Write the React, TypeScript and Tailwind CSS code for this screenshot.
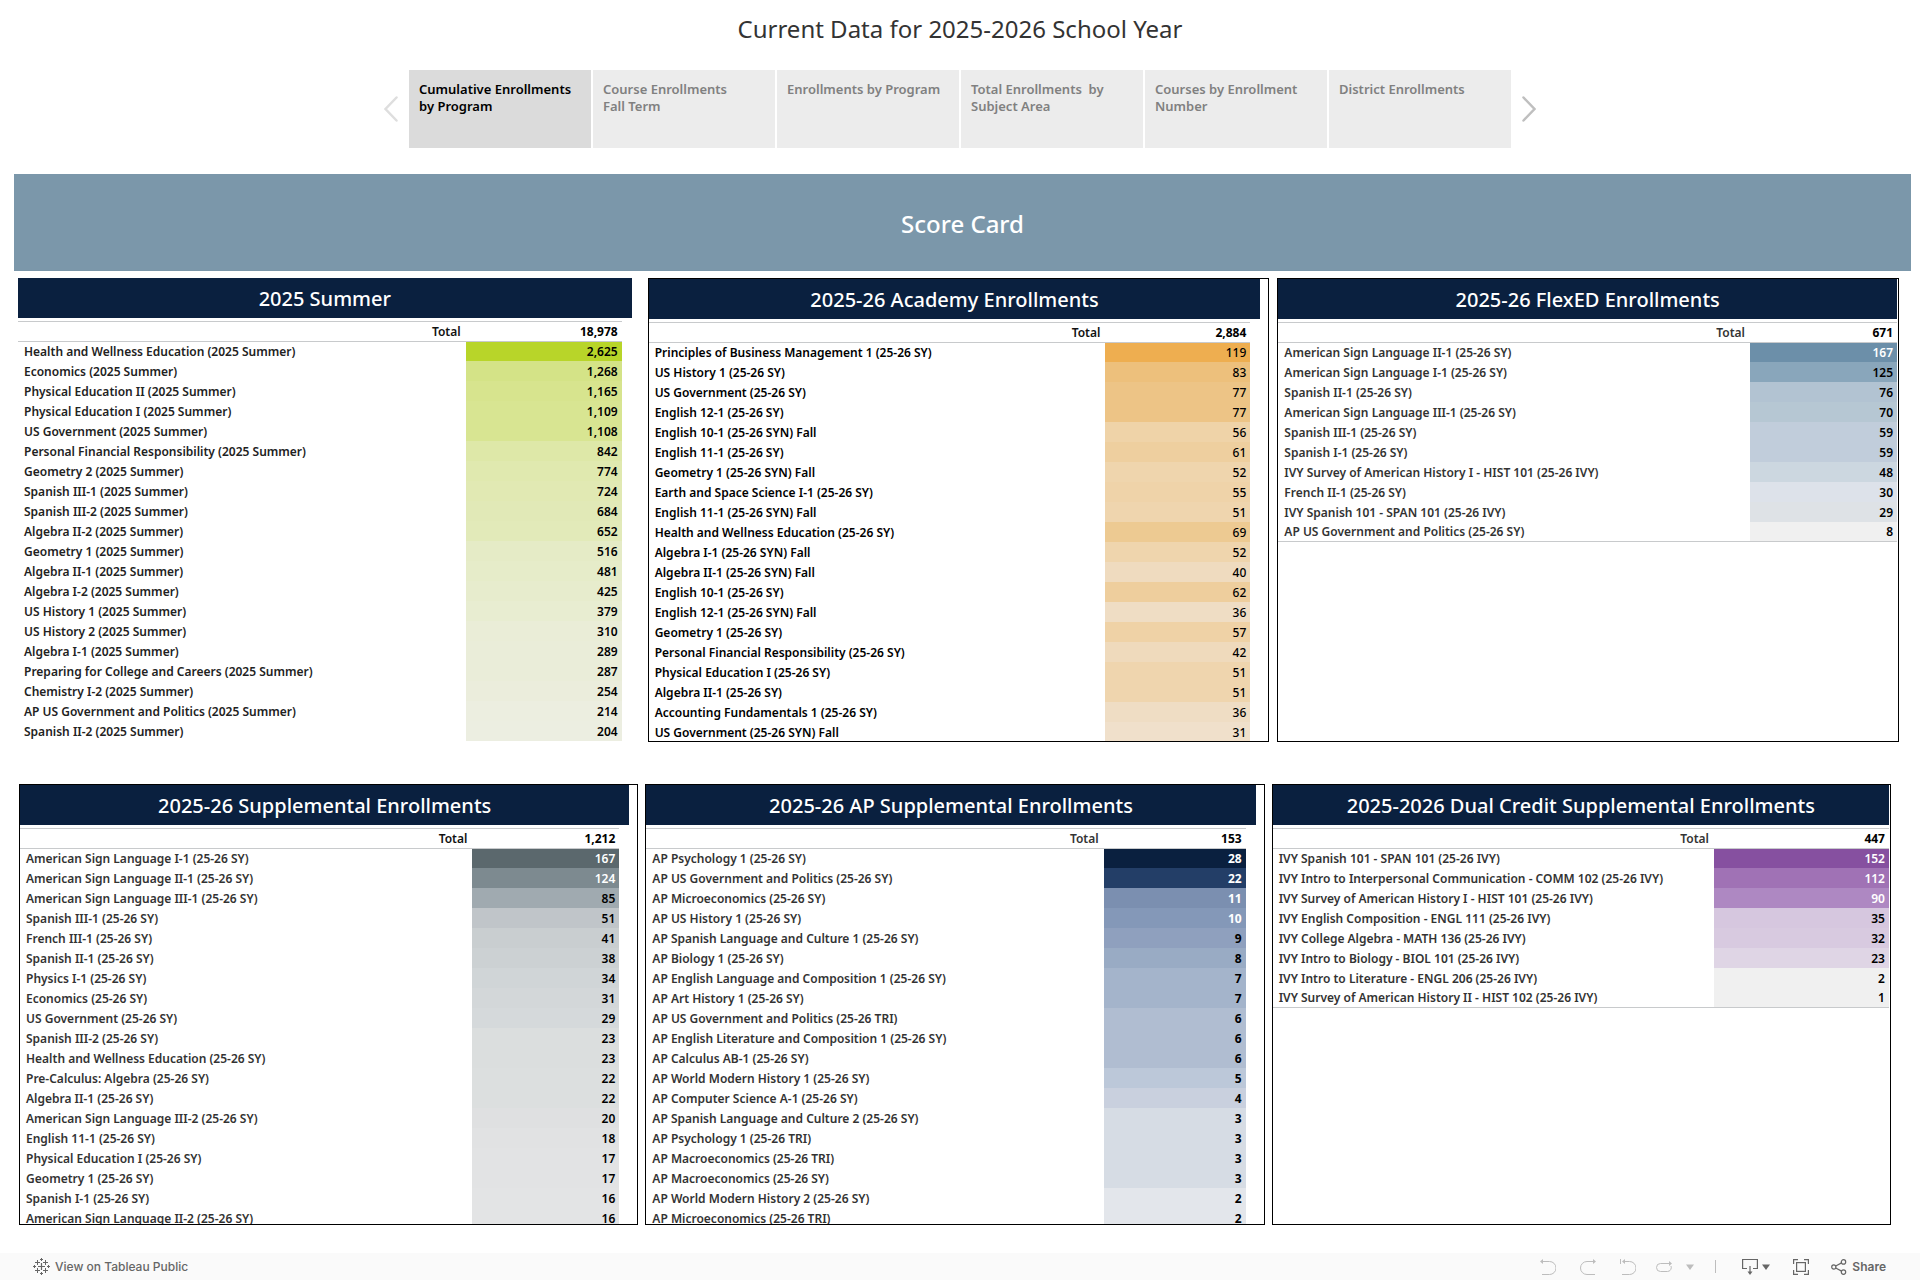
import React, { useState } from "react";
import clsx from "clsx";

type Row = [name: string, value: string, color: string, light?: boolean];

interface ScoreTable {
  title: string;
  total: string;
  rows: Row[];
  frame: string;
  inset: string;
  tableInset: string;
  valueWidth: string;
  labelStyle: string;
  totalStyle: string;
  valueStyle: string;
  closed?: boolean;
}

const tabs = [
  "Cumulative Enrollments\nby Program",
  "Course Enrollments\nFall Term",
  "Enrollments by Program",
  "Total Enrollments  by\nSubject Area",
  "Courses by Enrollment\nNumber",
  "District Enrollments",
];

const topTables: ScoreTable[] = [
  {
    title: "2025 Summer",
    total: "18,978",
    frame: "",
    inset: "mr-2",
    tableInset: "pr-[18px]",
    valueWidth: "w-[156px]",
    labelStyle: "text-[#222222]",
    totalStyle: "text-[#111111]",
    valueStyle: "font-semibold",
    rows: [
      ["Health and Wellness Education (2025 Summer)", "2,625", "#b8d529"],
      ["Economics (2025 Summer)", "1,268", "#d4e387"],
      ["Physical Education II (2025 Summer)", "1,165", "#d7e48e"],
      ["Physical Education I (2025 Summer)", "1,109", "#d8e592"],
      ["US Government (2025 Summer)", "1,108", "#d8e592"],
      ["Personal Financial Responsibility (2025 Summer)", "842", "#dee8a8"],
      ["Geometry 2 (2025 Summer)", "774", "#e0e9af"],
      ["Spanish III-1 (2025 Summer)", "724", "#e1e9b3"],
      ["Spanish III-2 (2025 Summer)", "684", "#e1e9b7"],
      ["Algebra II-2 (2025 Summer)", "652", "#e2eab9"],
      ["Geometry 1 (2025 Summer)", "516", "#e5ebc6"],
      ["Algebra II-1 (2025 Summer)", "481", "#e6ecc9"],
      ["Algebra I-2 (2025 Summer)", "425", "#e7eccd"],
      ["US History 1 (2025 Summer)", "379", "#e8edd1"],
      ["US History 2 (2025 Summer)", "310", "#eaedd7"],
      ["Algebra I-1 (2025 Summer)", "289", "#eaedd9"],
      ["Preparing for College and Careers (2025 Summer)", "287", "#eaedd9"],
      ["Chemistry I-2 (2025 Summer)", "254", "#ebeddc"],
      ["AP US Government and Politics (2025 Summer)", "214", "#eceee0"],
      ["Spanish II-2 (2025 Summer)", "204", "#eceee1"],
    ],
  },
  {
    title: "2025-26 Academy Enrollments",
    total: "2,884",
    frame: "border border-black",
    inset: "mr-2",
    tableInset: "pr-[18px]",
    valueWidth: "w-[145px]",
    labelStyle: "text-black",
    totalStyle: "text-[#111111]",
    valueStyle: "font-medium",
    rows: [
      ["Principles of Business Management 1 (25-26 SY)", "119", "#eeae50"],
      ["US History 1 (25-26 SY)", "83", "#edc07c"],
      ["US Government (25-26 SY)", "77", "#edc486"],
      ["English 12-1 (25-26 SY)", "77", "#edc486"],
      ["English 10-1 (25-26 SYN) Fall", "56", "#efd3a8"],
      ["English 11-1 (25-26 SY)", "61", "#eecf9f"],
      ["Geometry 1 (25-26 SYN) Fall", "52", "#efd5ad"],
      ["Earth and Space Science I-1 (25-26 SY)", "55", "#efd3a9"],
      ["English 11-1 (25-26 SYN) Fall", "51", "#efd5ae"],
      ["Health and Wellness Education (25-26 SY)", "69", "#edca92"],
      ["Algebra I-1 (25-26 SYN) Fall", "52", "#efd5ad"],
      ["Algebra II-1 (25-26 SYN) Fall", "40", "#efdbbf"],
      ["English 10-1 (25-26 SY)", "62", "#eece9d"],
      ["English 12-1 (25-26 SYN) Fall", "36", "#efddc4"],
      ["Geometry 1 (25-26 SY)", "57", "#efd2a6"],
      ["Personal Financial Responsibility (25-26 SY)", "42", "#efdabc"],
      ["Physical Education I (25-26 SY)", "51", "#efd5ae"],
      ["Algebra II-1 (25-26 SY)", "51", "#efd5ae"],
      ["Accounting Fundamentals 1 (25-26 SY)", "36", "#efddc4"],
      ["US Government (25-26 SYN) Fall", "31", "#f0e0cb"],
    ],
  },
  {
    title: "2025-26 FlexED Enrollments",
    total: "671",
    frame: "border border-black",
    inset: "mr-px",
    tableInset: "pr-px",
    valueWidth: "w-[147px]",
    labelStyle: "text-[#333333]",
    totalStyle: "text-[#333333]",
    valueStyle: "font-semibold",
    closed: true,
    rows: [
      ["American Sign Language II-1 (25-26 SY)", "167", "#6c8fa9", true],
      ["American Sign Language I-1 (25-26 SY)", "125", "#89a6bb"],
      ["Spanish II-1 (25-26 SY)", "76", "#b2c3d2"],
      ["American Sign Language III-1 (25-26 SY)", "70", "#b6c7d3"],
      ["Spanish III-1 (25-26 SY)", "59", "#c1cddb"],
      ["Spanish I-1 (25-26 SY)", "59", "#c1cddb"],
      ["IVY Survey of American History I - HIST 101 (25-26 IVY)", "48", "#ccd7e0"],
      ["French II-1 (25-26 SY)", "30", "#dde2ea"],
      ["IVY Spanish 101 - SPAN 101 (25-26 IVY)", "29", "#dee2e6"],
      ["AP US Government and Politics (25-26 SY)", "8", "#f0f0f0"],
    ],
  },
];

const bottomTables: ScoreTable[] = [
  {
    title: "2025-26 Supplemental Enrollments",
    total: "1,212",
    frame: "border border-black",
    inset: "mr-2",
    tableInset: "pr-[18px]",
    valueWidth: "w-[147px]",
    labelStyle: "text-[#333333]",
    totalStyle: "text-[#111111]",
    valueStyle: "font-semibold",
    rows: [
      ["American Sign Language I-1 (25-26 SY)", "167", "#5b686d", true],
      ["American Sign Language II-1 (25-26 SY)", "124", "#7d8a90", true],
      ["American Sign Language III-1 (25-26 SY)", "85", "#a0aab0"],
      ["Spanish III-1 (25-26 SY)", "51", "#c0c5c9"],
      ["French III-1 (25-26 SY)", "41", "#c9ced0"],
      ["Spanish II-1 (25-26 SY)", "38", "#ccd1d3"],
      ["Physics I-1 (25-26 SY)", "34", "#d0d5d7"],
      ["Economics (25-26 SY)", "31", "#d3d7d9"],
      ["US Government (25-26 SY)", "29", "#d5d9db"],
      ["Spanish III-2 (25-26 SY)", "23", "#dbdede"],
      ["Health and Wellness Education (25-26 SY)", "23", "#dbdede"],
      ["Pre-Calculus: Algebra (25-26 SY)", "22", "#dcdfdf"],
      ["Algebra II-1 (25-26 SY)", "22", "#dcdfdf"],
      ["American Sign Language III-2 (25-26 SY)", "20", "#dfe0e1"],
      ["English 11-1 (25-26 SY)", "18", "#e1e2e3"],
      ["Physical Education I (25-26 SY)", "17", "#e2e3e4"],
      ["Geometry 1 (25-26 SY)", "17", "#e2e3e4"],
      ["Spanish I-1 (25-26 SY)", "16", "#e3e4e5"],
      ["American Sign Language II-2 (25-26 SY)", "16", "#e3e4e5"],
    ],
  },
  {
    title: "2025-26 AP Supplemental Enrollments",
    total: "153",
    frame: "border border-black",
    inset: "mr-2",
    tableInset: "pr-[18px]",
    valueWidth: "w-[142px]",
    labelStyle: "text-[#333333]",
    totalStyle: "text-[#333333]",
    valueStyle: "font-bold",
    rows: [
      ["AP Psychology 1 (25-26 SY)", "28", "#0a203f", true],
      ["AP US Government and Politics (25-26 SY)", "22", "#233e67", true],
      ["AP Microeconomics (25-26 SY)", "11", "#7b8fb0", true],
      ["AP US History 1 (25-26 SY)", "10", "#8498b8", true],
      ["AP Spanish Language and Culture 1 (25-26 SY)", "9", "#8fa0be"],
      ["AP Biology 1 (25-26 SY)", "8", "#99abc4"],
      ["AP English Language and Composition 1 (25-26 SY)", "7", "#a4b4cb"],
      ["AP Art History 1 (25-26 SY)", "7", "#a4b4cb"],
      ["AP US Government and Politics (25-26 TRI)", "6", "#b0bdd1"],
      ["AP English Literature and Composition 1 (25-26 SY)", "6", "#b0bdd1"],
      ["AP Calculus AB-1 (25-26 SY)", "6", "#b0bdd1"],
      ["AP World Modern History 1 (25-26 SY)", "5", "#bcc8d9"],
      ["AP Computer Science A-1 (25-26 SY)", "4", "#c9d0de"],
      ["AP Spanish Language and Culture 2 (25-26 SY)", "3", "#d6dce4"],
      ["AP Psychology 1 (25-26 TRI)", "3", "#d6dce4"],
      ["AP Macroeconomics (25-26 TRI)", "3", "#d6dce4"],
      ["AP Macroeconomics (25-26 SY)", "3", "#d6dce4"],
      ["AP World Modern History 2 (25-26 SY)", "2", "#e3e6eb"],
      ["AP Microeconomics (25-26 TRI)", "2", "#e3e6eb"],
    ],
  },
  {
    title: "2025-2026 Dual Credit Supplemental Enrollments",
    total: "447",
    frame: "border border-black",
    inset: "mr-px",
    tableInset: "pr-px",
    valueWidth: "w-[175px]",
    labelStyle: "text-[#333333]",
    totalStyle: "text-[#333333]",
    valueStyle: "font-semibold",
    closed: true,
    rows: [
      ["IVY Spanish 101 - SPAN 101 (25-26 IVY)", "152", "#8650a0", true],
      ["IVY Intro to Interpersonal Communication - COMM 102 (25-26 IVY)", "112", "#a072b5", true],
      ["IVY Survey of American History I - HIST 101 (25-26 IVY)", "90", "#ae88c2", true],
      ["IVY English Composition - ENGL 111 (25-26 IVY)", "35", "#d6c7df"],
      ["IVY College Algebra - MATH 136 (25-26 IVY)", "32", "#d8cae0"],
      ["IVY Intro to Biology - BIOL 101 (25-26 IVY)", "23", "#dfd5e5"],
      ["IVY Intro to Literature - ENGL 206 (25-26 IVY)", "2", "#f0f0f0"],
      ["IVY Survey of American History II - HIST 102 (25-26 IVY)", "1", "#f0f0f0"],
    ],
  },
];

function Panel({ data, height }: { data: ScoreTable; height: string }) {
  return (
    <section className={clsx("min-w-0 overflow-hidden", height, data.frame)}>
      <h2
        className={clsx(
          "flex h-10 items-center justify-center bg-[#0a203f] pt-px text-xl font-medium text-white",
          data.inset
        )}
      >
        {data.title}
      </h2>
      <div className={clsx("pt-[3px]", data.tableInset)}>
        <table className="w-full table-fixed border-separate border-spacing-0 text-xs leading-4">
          <thead>
            <tr>
              <th
                scope="row"
                className={clsx(
                  "h-5 border-t border-[#c8cacc] p-0 pr-[5px] text-right font-semibold",
                  data.totalStyle
                )}
              >
                Total
              </th>
              <td
                className={clsx(
                  "h-5 border-t border-[#c8cacc] p-0 pr-1 text-right font-bold text-black",
                  data.valueWidth
                )}
              >
                {data.total}
              </td>
            </tr>
          </thead>
          <tbody>
            {data.rows.map(([name, value, color, light], i) => {
              const lines = clsx(
                i === 0 ? "border-t" : "pt-px",
                data.closed && i === data.rows.length - 1 && "border-b"
              );
              return (
                <tr key={name}>
                  <th
                    scope="row"
                    className={clsx(
                      "h-5 truncate border-[#c8cacc] p-0 pl-1.5 text-left font-semibold",
                      data.labelStyle,
                      lines
                    )}
                  >
                    {name}
                  </th>
                  <td
                    className={clsx(
                      "h-5 border-[#c8cacc] p-0 pr-1 text-right",
                      light ? "text-white" : "text-black",
                      data.valueStyle,
                      lines
                    )}
                    style={{ backgroundColor: color }}
                  >
                    {value}
                  </td>
                </tr>
              );
            })}
          </tbody>
        </table>
      </div>
    </section>
  );
}

function TableauMark() {
  return (
    <svg width="17" height="17" viewBox="0 0 17 17" fill="none" stroke="#666666">
      <path d="M8.5 5v7M5 8.5h7" strokeWidth="1.2" />
      <path d="M4.5 2v5M2 4.5h5M12.5 2v5M10 4.5h5M4.5 10v5M2 12.5h5M12.5 10v5M10 12.5h5" />
      <path d="M8.5 0v3M7 1.5h3M8.5 14v3M7 15.5h3M1.5 7v3M0 8.5h3M15.5 7v3M14 8.5h3" />
    </svg>
  );
}

function Caret() {
  return (
    <svg width="8" height="6" viewBox="0 0 8 6" fill="currentColor">
      <path d="M0 .5h8L4 6z" />
    </svg>
  );
}

function Toolbar() {
  return (
    <footer className="flex h-[27px] items-center justify-between bg-[#fafafa] pr-[34px] pl-[33px] font-[Inter,sans-serif] text-xs font-medium text-[#666666]">
      <a href="#tableau-public" className="flex items-center gap-[5px]">
        <TableauMark />
        View on Tableau Public
      </a>
      <div className="flex items-center">
        <div className="flex items-center gap-6 text-[#bdbdbd]">
          <button aria-label="Undo">
            <svg width="16" height="16" viewBox="0 0 16 16" fill="none" stroke="currentColor">
              <path d="M2 2.5h7.5a6.5 6.5 0 0 1 0 13H2" />
              <path d="M0 2.5 3 0v5z" fill="currentColor" stroke="none" />
            </svg>
          </button>
          <button aria-label="Redo">
            <svg width="16" height="16" viewBox="0 0 16 16" fill="none" stroke="currentColor">
              <path d="M14 2.5H7a6.5 6.5 0 0 0 0 13h8" />
              <path d="M16 2.5 13 0v5z" fill="currentColor" stroke="none" />
            </svg>
          </button>
          <button aria-label="Revert">
            <svg width="16" height="16" viewBox="0 0 16 16" fill="none" stroke="currentColor">
              <path d="M.5 0v5M4 2.5h5.5a6.5 6.5 0 0 1 0 13H2" />
              <path d="M2 2.5 5 0v5z" fill="currentColor" stroke="none" />
            </svg>
          </button>
        </div>
        <button aria-label="Refresh" className="ml-5 flex items-center gap-[14px] text-[#bdbdbd]">
          <svg width="16" height="16" viewBox="0 0 16 16" fill="none" stroke="currentColor">
            <path d="M14 4.5H4.500a4 4 0 0 0 0 8h7a4 4 0 0 0 3.500-5.500" />
            <path d="M16 4.5 13 2v5z" fill="currentColor" stroke="none" />
          </svg>
          <Caret />
        </button>
        <span className="ml-[21px] h-[13px] w-px bg-[#bdbdbd]" />
        <button aria-label="Download" className="ml-[26px] flex items-center gap-1">
          <svg width="16" height="16" viewBox="0 0 16 16" fill="none" stroke="currentColor" strokeWidth="1.2">
            <path d="M5 9.5H.6v-9h14.800v9H11M8 7v7" />
            <path d="M5.500 12.500h5L8 16z" fill="currentColor" stroke="none" />
          </svg>
          <Caret />
        </button>
        <button aria-label="Full Screen" className="ml-[23px]">
          <svg width="16" height="16" viewBox="0 0 16 16" fill="none" stroke="currentColor" strokeWidth="1.2">
            <path d="M.6 5V.6H5M11 .6h4.400V5M15.400 11v4.400H11M5 15.400H.6V11" />
            <rect x="3.600" y="3.600" width="8.800" height="8.800" />
          </svg>
        </button>
        <button className="ml-[22px] flex items-center gap-[5px] font-semibold">
          <svg width="16" height="16" viewBox="0 0 16 16" fill="none" stroke="currentColor" strokeWidth="1.2">
            <circle cx="2.800" cy="8" r="2.100" />
            <circle cx="12.500" cy="2.900" r="2.200" />
            <circle cx="12.500" cy="13.100" r="2.200" />
            <path d="m4.700 7 5.900-3.100M4.700 9l5.900 3.100" />
          </svg>
          Share
        </button>
      </div>
    </footer>
  );
}

export default function App() {
  const [active, setActive] = useState(0);

  return (
    <div className="flex min-h-screen flex-col bg-white font-['Noto_Sans','Open_Sans',sans-serif]">
      <main className="flex-1">
        <h1 className="pt-3 text-center text-2xl leading-[34px] font-normal text-[#333333]">
          Current Data for 2025-2026 School Year
        </h1>

        <nav className="mt-6 flex items-center justify-center gap-[11px]">
          <button
            aria-label="Previous"
            className="text-[#dedede]"
            onClick={() => setActive(Math.max(0, active - 1))}
          >
            <svg width="14" height="26" viewBox="0 0 14 26" fill="none" stroke="currentColor" strokeWidth="2.5" strokeLinecap="round">
              <path d="M12.500 1.500 1.500 13l11 11.500" />
            </svg>
          </button>
          <div className="flex gap-0.5">
            {tabs.map((tab, i) => (
              <button
                key={tab}
                onClick={() => setActive(i)}
                className={clsx(
                  "flex h-[78px] w-[182px] items-start px-2.5 pt-[11px] text-left text-[13px] leading-[17px] font-semibold whitespace-pre",
                  i === active ? "bg-[#dbdbdb] text-black" : "bg-[#ececec] text-[#808080]"
                )}
              >
                {tab}
              </button>
            ))}
          </div>
          <button
            aria-label="Next"
            className="text-[#bfbfbf]"
            onClick={() => setActive(Math.min(tabs.length - 1, active + 1))}
          >
            <svg width="14" height="26" viewBox="0 0 14 26" fill="none" stroke="currentColor" strokeWidth="2.5" strokeLinecap="round">
              <path d="m1.500 1.500 11 11.500-11 11.500" />
            </svg>
          </button>
        </nav>

        <div className="mt-[26px] mr-[9px] ml-3.5 flex h-[97px] items-center justify-center bg-[#7b97aa] pt-0.5 text-2xl font-medium text-white">
          Score Card
        </div>

        <div className="mt-[7px] grid grid-cols-3 gap-2 pr-[21px] pl-[18px]">
          {topTables.map((table) => (
            <Panel key={table.title} data={table} height="h-[464px]" />
          ))}
        </div>
        <div className="mt-[42px] grid grid-cols-3 gap-[7px] pr-[29px] pl-[19px]">
          {bottomTables.map((table) => (
            <Panel key={table.title} data={table} height="h-[441px]" />
          ))}
        </div>
      </main>
      <Toolbar />
    </div>
  );
}
